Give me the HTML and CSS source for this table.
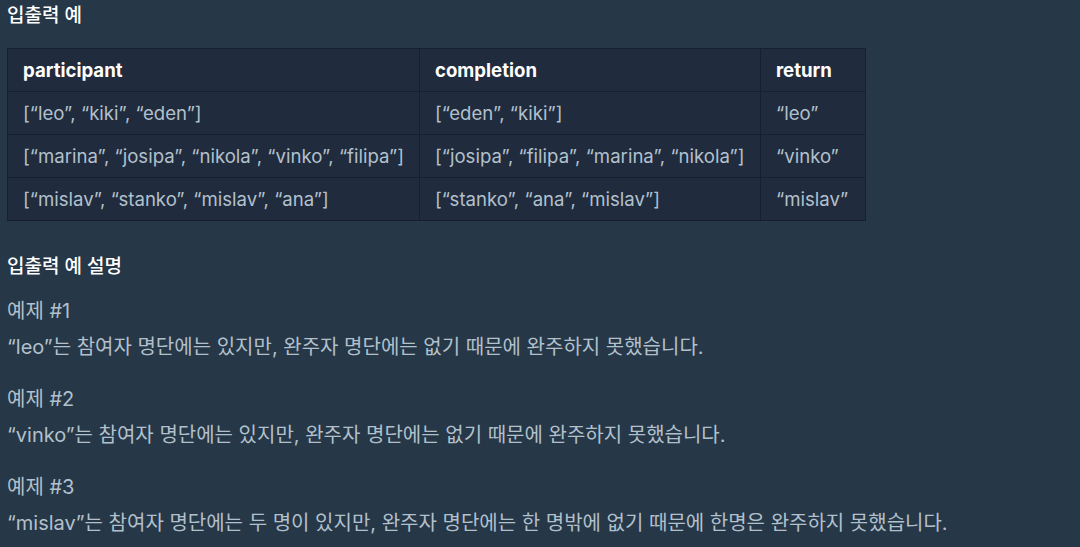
FILE: index.html
```html
<!DOCTYPE html>
<html lang="ko">
<head>
  <meta charset="UTF-8">
  <title>입출력 예</title>
  <link rel="stylesheet" href="styles.css">
</head>
<body>
<div class="markdown">
  <h5>입출력 예</h5>
  <table>
    <thead>
      <tr><th class="c1">participant</th><th class="c2">completion</th><th class="c3">return</th></tr>
    </thead>
    <tbody>
      <tr><td>[“leo”, “kiki”, “eden”]</td><td>[“eden”, “kiki”]</td><td>“leo”</td></tr>
      <tr><td>[“marina”, “josipa”, “nikola”, “vinko”, “filipa”]</td><td>[“josipa”, “filipa”, “marina”, “nikola”]</td><td>“vinko”</td></tr>
      <tr><td>[“mislav”, “stanko”, “mislav”, “ana”]</td><td>[“stanko”, “ana”, “mislav”]</td><td>“mislav”</td></tr>
    </tbody>
  </table>
  <h5>입출력 예 설명</h5>
  <p>예제 #1<br>“leo”는 참여자 명단에는 있지만, 완주자 명단에는 없기 때문에 완주하지 못했습니다.</p>
  <p>예제 #2<br>“vinko”는 참여자 명단에는 있지만, 완주자 명단에는 없기 때문에 완주하지 못했습니다.</p>
  <p>예제 #3<br>“mislav”는 참여자 명단에는 두 명이 있지만, 완주자 명단에는 한 명밖에 없기 때문에 한명은 완주하지 못했습니다.</p>
</div>
</body>
</html>
```

FILE: styles.css
```css
body { margin:0; background:#263747; font-family: Inter, "Noto Sans CJK KR", sans-serif; }
.markdown { padding:0 7px; color:#b2c0cc; font-size:20px; }
h5 { color:#fff; font-size:19px; font-weight:500; margin:0; line-height:32px; }
table { border-collapse:collapse; table-layout:fixed; width:858px; background:#202b3d; margin:16px 0 30px; font-size:18.6px; }
th, td { border:1px solid #172030; text-align:left; padding:0 15px; height:43px; box-sizing:border-box; white-space:nowrap; }
th { color:#fff; font-weight:700; }
.c1 { width:412px; }
.c2 { width:341px; }
.c3 { width:105px; }
p { margin:16px 0 0; line-height:36px; }
h5 + p { margin-top:10px; }
```
